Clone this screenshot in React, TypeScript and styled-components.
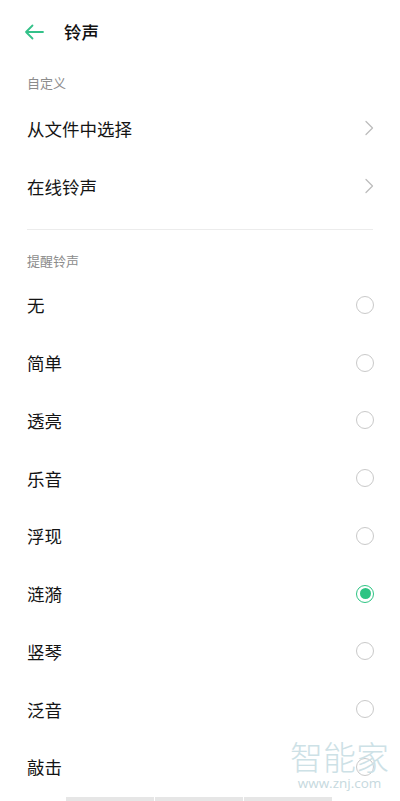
import React, { useState } from 'react';
import styled, { createGlobalStyle } from 'styled-components';

const GlobalStyle = createGlobalStyle`
  html, body {
    margin: 0;
    padding: 0;
    background: #ffffff;
  }
  body {
    font-family: "Noto Sans CJK SC", "Noto Sans", sans-serif;
    color: #111111;
  }
`;

const Page = styled.div`
  position: relative;
  width: 400px;
  height: 801px;
  overflow: hidden;
  background: #ffffff;
  display: flex;
  flex-direction: column;
`;

const Header = styled.header`
  height: 64px;
  display: flex;
  align-items: center;
  padding-left: 24px;
  gap: 20px;
`;

const Title = styled.h1`
  margin: 0;
  font-size: 17.5px;
  font-weight: 500;
  color: #111111;
  line-height: 24px;
`;

const SectionLabel = styled.div<{ $top: number; $bottom: number }>`
  padding: ${(p) => p.$top}px 27px ${(p) => p.$bottom}px;
  font-size: 13px;
  line-height: 18px;
  color: #8c8c8c;
`;

const Row = styled.div<{ $h: number }>`
  height: ${(p) => p.$h}px;
  display: flex;
  align-items: center;
  justify-content: space-between;
  padding: 0 26px 0 27px;
  font-size: 17.5px;
  color: #141414;
  cursor: pointer;
`;

const Divider = styled.div`
  margin: 14px 27px 0;
  height: 1px;
  background: #ececec;
`;

const Radio = styled.span<{ $on: boolean }>`
  box-sizing: border-box;
  width: 18px;
  height: 18px;
  border-radius: 50%;
  border: 1.5px solid ${(p) => (p.$on ? '#2dc483' : '#c9c9c9')};
  display: flex;
  align-items: center;
  justify-content: center;

  &::after {
    content: '';
    width: 11px;
    height: 11px;
    border-radius: 50%;
    background: ${(p) => (p.$on ? '#2dc483' : 'transparent')};
  }
`;

const BottomBar = styled.div`
  display: flex;
  gap: 1px;
  margin: 1px 0 0 66px;
`;

const BarSeg = styled.div`
  width: 88px;
  height: 4px;
  background: #e6e6e6;
`;

const Watermark = styled.div`
  position: absolute;
  left: 290px;
  top: 739px;
  display: flex;
  flex-direction: column;
  align-items: center;
  gap: 3px;
  pointer-events: none;
  color: #cde1e6;
`;

const MarkBig = styled.div`
  font-size: 33px;
  line-height: 34px;
  font-family: "Noto Sans CJK SC", sans-serif;
  font-weight: 300;
`;

const MarkUrl = styled.div`
  font-size: 13.5px;
  line-height: 15px;
  font-family: "Open Sans", "Liberation Sans", sans-serif;
  color: #c6d9de;
`;

const BackArrow = () => (
  <svg width="20" height="16" viewBox="0 0 20 16" fill="none">
    <path d="M19 8H2M8.5 1.5L2 8l6.5 6.5" stroke="#34c189" strokeWidth="1.8" strokeLinecap="round" strokeLinejoin="round" />
  </svg>
);

const Chevron = () => (
  <svg width="10" height="16" viewBox="0 0 10 16" fill="none">
    <path d="M2 1.5L8.5 8L2 14.5" stroke="#bdbdbd" strokeWidth="1.3" strokeLinecap="round" strokeLinejoin="round" />
  </svg>
);

const tones = ['无', '简单', '透亮', '乐音', '浮现', '涟漪', '竖琴', '泛音', '敲击'];

export default function App() {
  const [selected, setSelected] = useState('涟漪');

  return (
    <Page>
      <GlobalStyle />
      <Header>
        <BackArrow />
        <Title>铃声</Title>
      </Header>

      <SectionLabel $top={10} $bottom={7}>自定义</SectionLabel>
      <Row $h={58}>
        从文件中选择
        <Chevron />
      </Row>
      <Row $h={58}>
        在线铃声
        <Chevron />
      </Row>
      <Divider />

      <SectionLabel $top={22} $bottom={6}>提醒铃声</SectionLabel>
      {tones.map((t) => (
        <Row $h={57.75} key={t} onClick={() => setSelected(t)}>
          {t}
          <Radio $on={selected === t} />
        </Row>
      ))}

      <BottomBar>
        <BarSeg />
        <BarSeg />
        <BarSeg />
      </BottomBar>

      <Watermark>
        <MarkBig>智能家</MarkBig>
        <MarkUrl>www.znj.com</MarkUrl>
      </Watermark>
    </Page>
  );
}
